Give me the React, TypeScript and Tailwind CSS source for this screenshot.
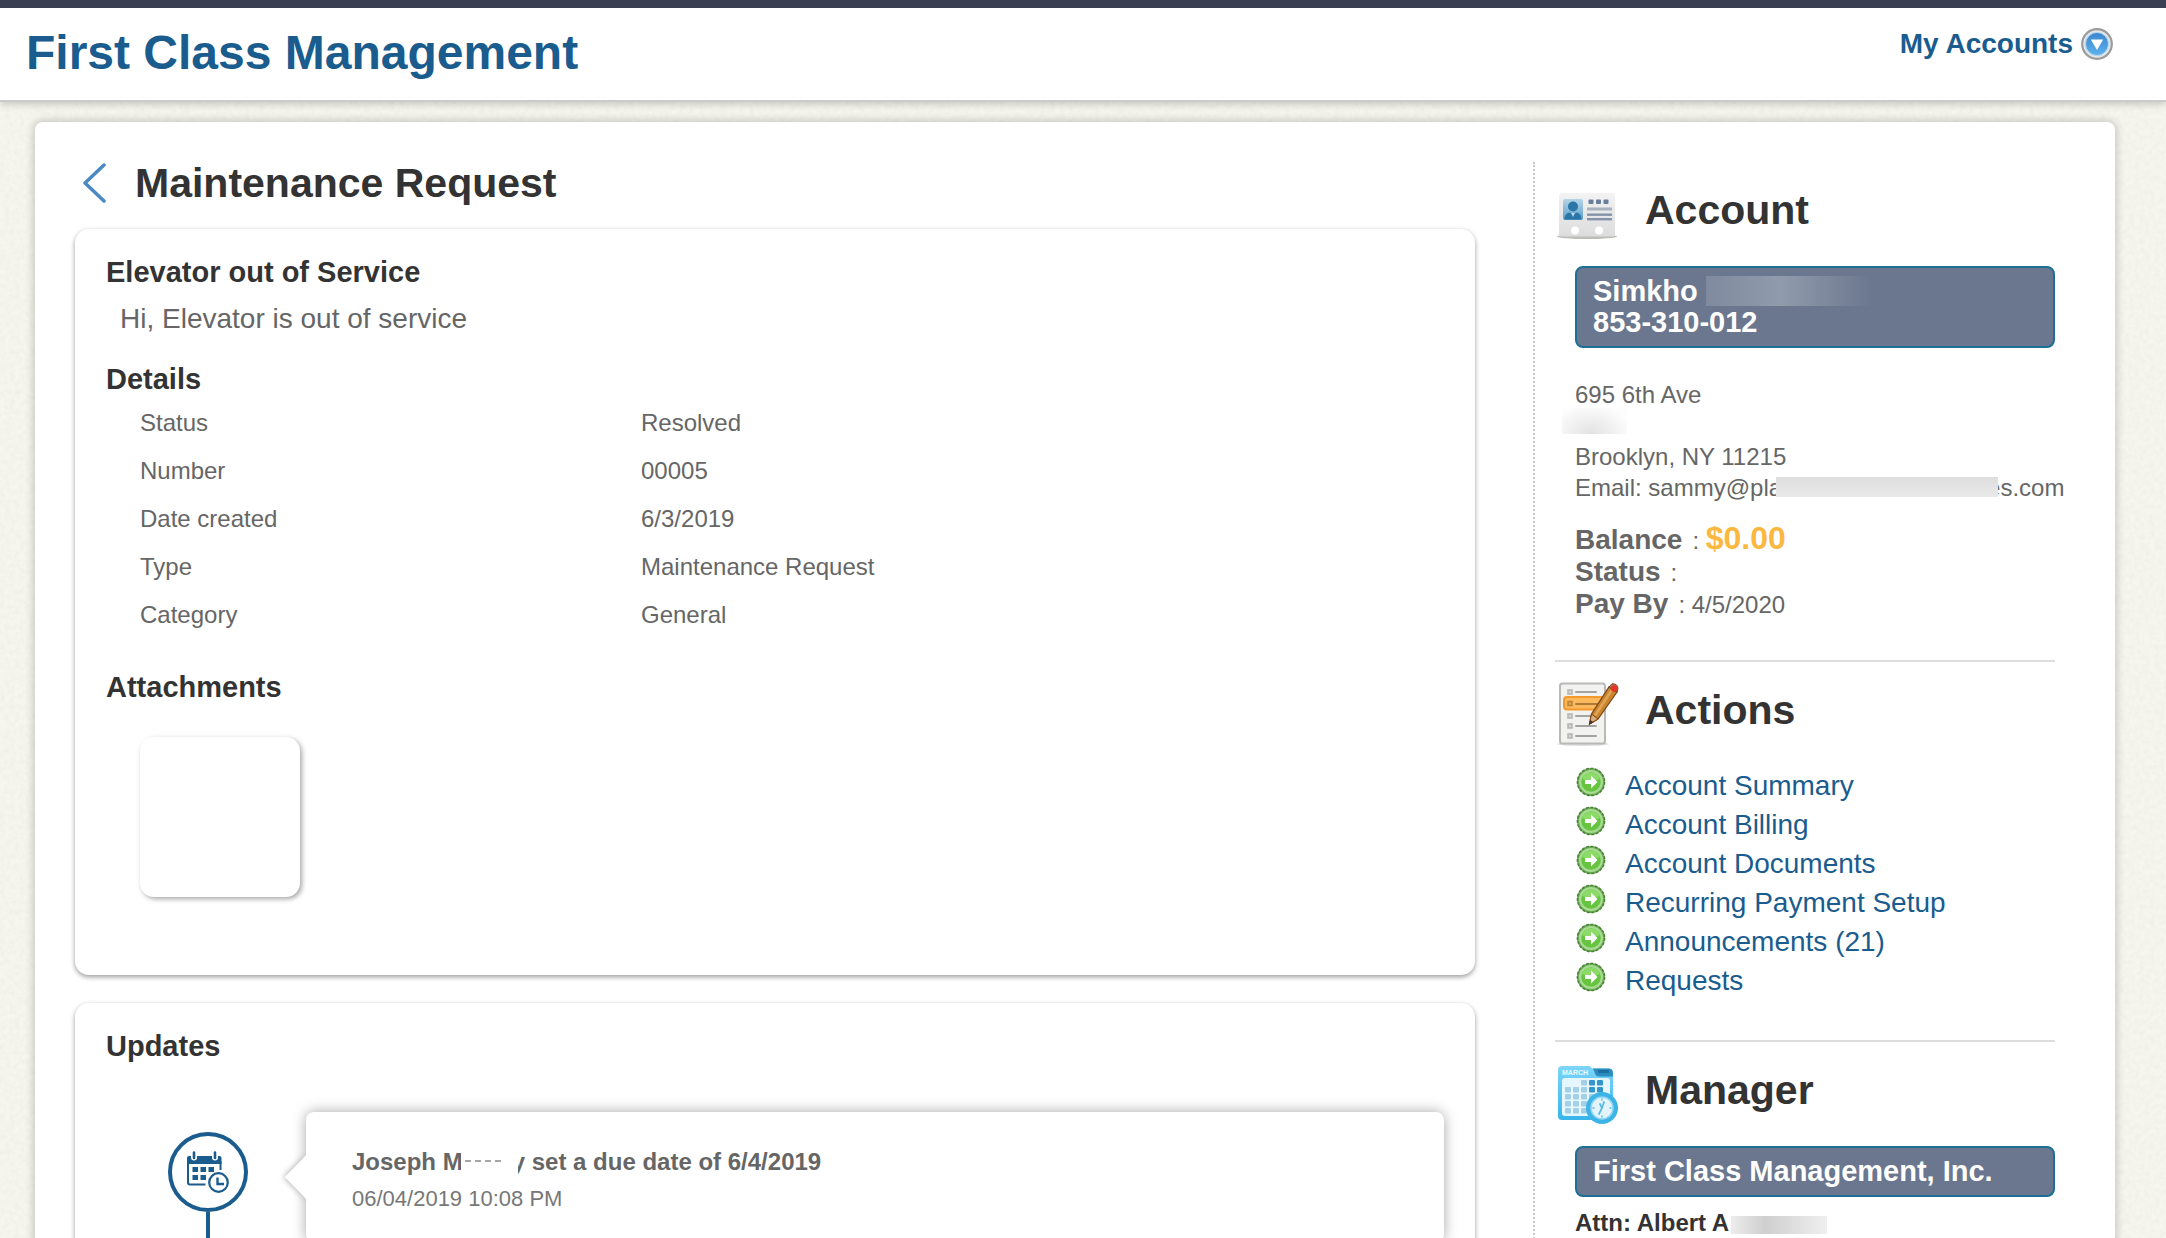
import type { ReactNode } from "react";

const details = [
  { label: "Status", value: "Resolved" },
  { label: "Number", value: "00005" },
  { label: "Date created", value: "6/3/2019" },
  { label: "Type", value: "Maintenance Request" },
  { label: "Category", value: "General" },
];

const actions = [
  "Account Summary",
  "Account Billing",
  "Account Documents",
  "Recurring Payment Setup",
  "Announcements (21)",
  "Requests",
];

const cardClass = "rounded-[14px] bg-white shadow-[0_2px_5px_rgba(0,0,0,0.4)]";
const h3Class = "text-[29px] leading-8 font-bold text-[#333333]";

function PaperTexture() {
  return (
    <svg className="absolute inset-0 h-full w-full" aria-hidden="true">
      <filter id="paper">
        <feTurbulence type="fractalNoise" baseFrequency="0.2" numOctaves="3" seed="4" />
        <feColorMatrix values="0 0 0 0 0.55  0 0 0 0 0.55  0 0 0 0 0.45  0.22 0 0 0 -0.07" />
      </filter>
      <rect width="100%" height="100%" filter="url(#paper)" />
    </svg>
  );
}

function DropIcon() {
  return (
    <svg className="h-8 w-8" viewBox="0 0 32 32" aria-hidden="true">
      <defs>
        <linearGradient id="dropBlue" x1="0" y1="0" x2="0" y2="1">
          <stop offset="0" stopColor="#3b86cf" />
          <stop offset="1" stopColor="#5db2ec" />
        </linearGradient>
      </defs>
      <circle cx="16" cy="16" r="14.8" fill="#e2e5e9" stroke="#9b9b9b" strokeWidth="2.2" />
      <circle cx="16" cy="16" r="11.5" fill="url(#dropBlue)" stroke="#b6d9f3" strokeWidth="1" />
      <path d="M9.8 11.6h12.4L16 22z" fill="#fff" />
    </svg>
  );
}

function AccountIcon() {
  return (
    <svg className="h-16 w-16 shrink-0" viewBox="0 0 64 64" aria-hidden="true">
      <defs>
        <linearGradient id="cardGray" x1="0" y1="0" x2="0" y2="1">
          <stop offset="0" stopColor="#f3f3f3" />
          <stop offset="1" stopColor="#dcdcdc" />
        </linearGradient>
        <linearGradient id="photoBlue" x1="0" y1="0" x2="0" y2="1">
          <stop offset="0" stopColor="#b5d5e8" />
          <stop offset="1" stopColor="#5c9dc8" />
        </linearGradient>
      </defs>
      <ellipse cx="32" cy="54.500" rx="30" ry="2.600" fill="#bdbdb8" />
      <path
        d="M7 11h50q3 0 3 3v39q0 1.500-2 1.500H6q-2 0-2-1.500V14q0-3 3-3z"
        fill="url(#cardGray)"
      />
      <circle cx="20" cy="48.500" r="4" fill="#fff" />
      <circle cx="44" cy="48.500" r="4" fill="#fff" />
      <rect x="8" y="17" width="20" height="21" rx="2" fill="url(#photoBlue)" />
      <circle cx="18" cy="24.500" r="5" fill="#2a76a9" />
      <path d="M9.500 37.500q0-6 5-7l3.500 2 3.500-2q5 1 5 7z" fill="#2a76a9" />
      <path d="m16 31 2 4 2-4z" fill="#b5d5e8" />
      <g fill="#697d9c">
        <rect x="33.500" y="17.500" width="5" height="4.500" rx="1" />
        <rect x="41" y="17.500" width="5" height="4.500" rx="1" />
        <rect x="48.500" y="17.500" width="5" height="4.500" rx="1" />
      </g>
      <g fill="#8492ab">
        <rect x="32" y="25.500" width="25" height="3" fill="#a7b1c0" />
        <rect x="32" y="31.500" width="25" height="2.400" />
        <rect x="32" y="36" width="25" height="2.400" />
      </g>
    </svg>
  );
}

function ActionsIcon() {
  const rows = [10, 34, 44, 54];
  return (
    <svg className="h-16 w-16 shrink-0" viewBox="0 0 64 64" aria-hidden="true">
      <ellipse cx="28" cy="62" rx="26" ry="2" fill="#dedede" />
      <rect x="5" y="1.500" width="45" height="60" rx="2.500" fill="#f2f2f1" stroke="#b9b9b7" strokeWidth="2" />
      {rows.map((y) => (
        <g key={y}>
          <rect x="13" y={y - 2} width="4" height="4" fill="#d4d4d2" stroke="#b4b4b2" strokeWidth="1.500" />
          <path d={`M21 ${y}h20`} stroke="#a3a3a1" strokeWidth="2" strokeLinecap="round" />
        </g>
      ))}
      <rect x="9" y="15" width="40" height="12.500" rx="3" fill="#fdb95e" stroke="#f49a2c" strokeWidth="2" />
      <rect x="13" y="19.500" width="4" height="4" fill="#dca254" stroke="#bd822f" strokeWidth="1.500" />
      <path d="M21 22h23" stroke="#ad7a37" strokeWidth="2" strokeLinecap="round" />
      <path d="m34.500 42 2-10L54 5l8 5-19 27z" fill="#c9842f" stroke="#7d4818" strokeWidth="1.300" />
      <path d="M40 33.500 57.500 7" stroke="#e3a552" strokeWidth="2.600" />
      <path d="m54 5 3-3.300q6 0 6 5L62 10z" fill="#b07b63" stroke="#7d4818" strokeWidth="1" />
      <circle cx="59" cy="6.500" r="3.200" fill="#e5352b" />
      <path d="m34.500 42 2-10 6.500 5z" fill="#d9ac7b" stroke="#7d4818" strokeWidth="1" />
      <path d="m34 43 1.200-5 3.300 2.300z" fill="#4a3222" />
    </svg>
  );
}

function ManagerIcon() {
  const cols = [0, 1, 2, 3, 4];
  const rows = [0, 1, 2, 3, 4];
  return (
    <svg className="h-16 w-16 shrink-0" viewBox="0 0 64 64" aria-hidden="true">
      <defs>
        <linearGradient id="calBlue" x1="0" y1="0" x2="0" y2="1">
          <stop offset="0" stopColor="#7dd5f8" />
          <stop offset="1" stopColor="#38b5ea" />
        </linearGradient>
      </defs>
      <path
        d="M7 4h27q2 0 3 2.500h17q4 0 4 4V54q0 4-4 4H7q-4 0-4-4V8q0-4 4-4z"
        fill="url(#calBlue)"
      />
      <path d="M38 6.500h15q5 0 5 5v3H44q-3 0-4-3z" fill="#2b8dc0" />
      <text
        x="7"
        y="13"
        fontSize="7"
        fontWeight="bold"
        fill="#e9f9ff"
        className="font-['Liberation_Sans']"
      >
        MARCH
      </text>
      <path d="M43 9.500h11" stroke="#1d6f9f" strokeWidth="3" />
      <rect x="7" y="16" width="48" height="38" rx="3" fill="#e6f6fd" />
      {rows.map((r) =>
        cols.map((c) =>
          r === 0 && c < 2 ? null : (
            <rect
              key={`${r}-${c}`}
              x={10 + c * 8}
              y={18 + r * 7}
              width="6"
              height="5.500"
              rx="1"
              fill={r < 2 && c > 2 ? "#3295cb" : "#a3cfe7"}
            />
          )
        )
      )}
      <circle cx="47" cy="46" r="16" fill="#3cb4e6" />
      <circle cx="47" cy="46" r="11" fill="#e3f4fb" stroke="#90d5f2" strokeWidth="1.500" />
      <path d="m44 52 3-6 2-6M47 46l-2-4" fill="none" stroke="#5bbbe3" strokeWidth="1.800" strokeLinecap="round" />
      <path d="M47 36.500v2M47 53.500v2M37.500 46h2M54.500 46h2" stroke="#5bbbe3" strokeWidth="1.500" />
    </svg>
  );
}

function GoIcon() {
  return (
    <svg className="h-8 w-8 shrink-0" viewBox="0 0 32 32" aria-hidden="true">
      <circle cx="16" cy="16" r="13" fill="#a8db93" stroke="#6fae58" strokeWidth="2" />
      <circle cx="16" cy="16" r="13.600" fill="none" stroke="#4a8338" strokeWidth="1.500" strokeDasharray="3 1.500" />
      <circle cx="16" cy="16" r="9.800" fill="#66c440" />
      <path d="M7 13a9.500 9.500 0 0 1 18 0q-9 4-18 0z" fill="#8cdb68" />
      <path d="M10 14h6v-4.500l6.500 6.500-6.500 6.500V18h-6z" fill="#fff" />
    </svg>
  );
}

function DueDateIcon() {
  return (
    <svg className="h-[42px] w-[42px]" viewBox="0 0 42 42" fill="none" aria-hidden="true">
      <path
        d="M0 13V7q0-2 2-2h2v1.500q0 3 3 3t3-3V5h15v1.500q0 3 3 3t3-3V5h1.500q2 0 2 2v6z"
        fill="#1a5c8e"
      />
      <path d="M1 10v21.500q0 2 2 2h15.500M33.500 10v9" stroke="#1a5c8e" strokeWidth="2" />
      <path d="M7 1.500v5.500M28 1.500v5.500" stroke="#1a5c8e" strokeWidth="2.600" strokeLinecap="round" />
      <g fill="#1a5c8e">
        <rect x="5.500" y="16" width="5.500" height="5" />
        <rect x="13.500" y="16" width="5.500" height="5" />
        <rect x="21.500" y="16" width="5.500" height="5" />
        <rect x="5.500" y="24" width="5.500" height="5" />
        <rect x="13.500" y="24" width="5.500" height="5" />
      </g>
      <circle cx="31.500" cy="31.500" r="11" fill="#fff" />
      <circle cx="31.500" cy="31.500" r="9.300" stroke="#1a5c8e" strokeWidth="2.200" />
      <path d="M30.500 26.500v6.500h6.500" stroke="#1a5c8e" strokeWidth="2.400" />
    </svg>
  );
}

function SectionTitle({ icon, children }: { icon: ReactNode; children: ReactNode }) {
  return (
    <div className="flex items-start gap-[26px]">
      {icon}
      <h2 className="mt-1.5 text-[41px] leading-[44px] font-bold text-[#333333]">{children}</h2>
    </div>
  );
}

function NameBox({ children }: { children: ReactNode }) {
  return (
    <div className="mt-5 ml-5 rounded-lg border-2 border-[#1c7096] bg-[#6b778e] px-4 py-2 text-[29px] leading-[31px] font-bold text-white">
      {children}
    </div>
  );
}

function Header() {
  return (
    <header className="relative flex h-[102px] items-start justify-between border-t-8 border-b-2 border-t-[#3a3f51] border-b-[#cbcbcb] bg-white pr-[53px] pl-[26px] shadow-[0_2px_8px_rgba(0,0,0,0.2)]">
      <h1 className="mt-[18px] text-[48px] leading-[54px] font-bold text-[#1a5c8e]">
        First Class Management
      </h1>
      <button className="mt-5 flex items-center gap-2 text-[28px] leading-8 font-bold text-[#1a5c8e]">
        My Accounts
        <DropIcon />
      </button>
    </header>
  );
}

function RequestCard() {
  return (
    <section className={`${cardClass} px-[31px] pt-[27px] pb-[78px]`}>
      <h3 className={h3Class}>Elevator out of Service</h3>
      <p className="mt-[15px] ml-3.5 text-[28px] leading-8">Hi, Elevator is out of service</p>
      <h3 className={`${h3Class} mt-7`}>Details</h3>
      <dl className="mt-1 ml-[34px] text-2xl leading-[48px]">
        {details.map((d) => (
          <div key={d.label} className="flex">
            <dt className="w-[501px]">{d.label}</dt>
            <dd>{d.value}</dd>
          </div>
        ))}
      </dl>
      <h3 className={`${h3Class} mt-8`}>Attachments</h3>
      <div className="mt-[34px] ml-[34px] h-40 w-40 rounded-[14px] bg-white shadow-[2px_2px_5px_rgba(0,0,0,0.35)]" />
    </section>
  );
}

function UpdatesCard() {
  return (
    <section className={`${cardClass} mt-7 px-[31px] pt-[27px] pb-8`}>
      <h3 className={h3Class}>Updates</h3>
      <div className="mt-[50px] flex gap-[58px] pl-[62px]">
        <div className="flex flex-col items-center pt-5">
          <div className="flex h-20 w-20 shrink-0 items-center justify-center rounded-full border-4 border-[#1a5c8e]">
            <DueDateIcon />
          </div>
          <div className="w-1 grow bg-[#1a5c8e]" />
        </div>
        <div className="relative h-[130px] flex-1 rounded-lg bg-white pt-9 pl-[46px] shadow-[0_0_14px_rgba(0,0,0,0.35)]">
          <svg
            className="absolute top-[37px] -left-[30px] h-14 w-8"
            viewBox="0 0 32 56"
            aria-hidden="true"
          >
            <filter id="tipShade" x="-50%" y="-50%" width="200%" height="200%">
              <feDropShadow dx="-1" dy="0" stdDeviation="3" floodOpacity="0.35" />
            </filter>
            <path d="M31 7v42L9 28z" fill="#fff" filter="url(#tipShade)" />
            <path d="M32 6v44h-2L9 28 30 6z" fill="#fff" />
          </svg>
          <p className="flex text-2xl leading-7 font-bold whitespace-pre">
            Joseph M
            <span className="relative -ml-0.5 w-[57px] bg-white pt-3 pl-1">
              <span className="block w-9 border-t-2 border-dashed border-[#a5a5a5]" />
            </span>
            <span className="-ml-1.5">y set a due date of 6/4/2019</span>
          </p>
          <p className="mt-[9px] text-[22px] leading-7 text-[#777777]">06/04/2019 10:08 PM</p>
        </div>
      </div>
    </section>
  );
}

function Sidebar() {
  return (
    <aside className="w-[522px] shrink-0 border-l-2 border-dotted border-[#c8c8c8] pt-5 pl-5">
      <section className="border-b-2 border-[#dddddd] pb-10">
        <SectionTitle icon={<AccountIcon />}>Account</SectionTitle>
        <NameBox>
          <p className="flex gap-2">
            Simkho
            <span className="h-[30px] w-[166px] bg-linear-to-r from-[#7f8a9f] via-[#909bac] via-45% to-[#6b778e]" />
          </p>
          <p>853-310-012</p>
        </NameBox>
        <div className="mt-[31px] ml-5 text-2xl leading-[31px] whitespace-nowrap">
          <p>695 6th Ave</p>
          <p className="-ml-[13px] flex h-[31px] items-start">
            <span className="-mt-0.5 h-[26px] w-[65px] bg-[radial-gradient(ellipse_at_45%_100%,#e4e4e4_5%,#f1f1f1_45%,#fdfdfd_80%)]" />
          </p>
          <p>Brooklyn, NY 11215</p>
          <p className="flex items-start">
            Email: sammy@pla
            <span className="relative mt-[5px] -ml-1.5 h-5 w-[222px] shrink-0 bg-linear-to-b from-[#dedede] to-[#e9e9e9]" />
            <span className="-ml-[11px]">es.com</span>
          </p>
        </div>
        <dl className="mt-[19px] ml-5 text-2xl leading-8">
          <div className="flex h-[34px] items-baseline gap-2.5">
            <dt className="text-[28px] font-bold">Balance</dt>
            <dd>
              : <span className="text-[32px] font-bold text-[#fbb840]">$0.00</span>
            </dd>
          </div>
          <div className="flex h-8 items-baseline gap-2.5">
            <dt className="text-[28px] font-bold">Status</dt>
            <dd>:</dd>
          </div>
          <div className="flex h-8 items-baseline gap-2.5">
            <dt className="text-[28px] font-bold">Pay By</dt>
            <dd>: 4/5/2020</dd>
          </div>
        </dl>
      </section>

      <section className="border-b-2 border-[#dddddd] pt-5 pb-10">
        <SectionTitle icon={<ActionsIcon />}>Actions</SectionTitle>
        <ul className="mt-5 ml-5">
          {actions.map((a) => (
            <li key={a} className="flex items-start gap-[18px]">
              <GoIcon />
              <a href="#" className="text-[28px] leading-[39px] text-[#1a5c8e]">
                {a}
              </a>
            </li>
          ))}
        </ul>
      </section>

      <section className="pt-5">
        <SectionTitle icon={<ManagerIcon />}>Manager</SectionTitle>
        <NameBox>First Class Management, Inc.</NameBox>
        <p className="mt-2.5 ml-5 flex items-center gap-0.5 text-2xl leading-[31px] font-bold text-[#333333]">
          Attn: Albert A
          <span className="mt-1 h-[18px] w-24 bg-linear-to-r from-[#ededed] via-[#cfcfcf] via-35% to-[#efefef]" />
        </p>
      </section>
    </aside>
  );
}

export default function App() {
  return (
    <div className="relative h-screen overflow-hidden bg-[#f6f6ee] font-['Liberation_Sans',Arial,sans-serif] text-[#666666]">
      <PaperTexture />
      <Header />
      <main className="relative mt-5 mr-[51px] ml-[35px] flex gap-[58px] rounded-t-lg bg-white pt-10 pr-[60px] pb-10 pl-10 shadow-[0_0_8px_2px_rgba(0,0,0,0.18)]">
        <div className="min-w-0 flex-1">
          <div className="mb-[25px] flex h-[42px] items-center gap-7 pl-2">
            <button aria-label="Back">
              <svg className="h-10 w-6" viewBox="0 0 24 40" fill="none" aria-hidden="true">
                <path d="M21 2 2 20l19 18" stroke="#4a89c3" strokeWidth="3.500" strokeLinecap="round" strokeLinejoin="round" />
              </svg>
            </button>
            <h2 className="text-[41px] leading-[42px] font-bold text-[#333333]">
              Maintenance Request
            </h2>
          </div>
          <RequestCard />
          <UpdatesCard />
        </div>
        <Sidebar />
      </main>
    </div>
  );
}
